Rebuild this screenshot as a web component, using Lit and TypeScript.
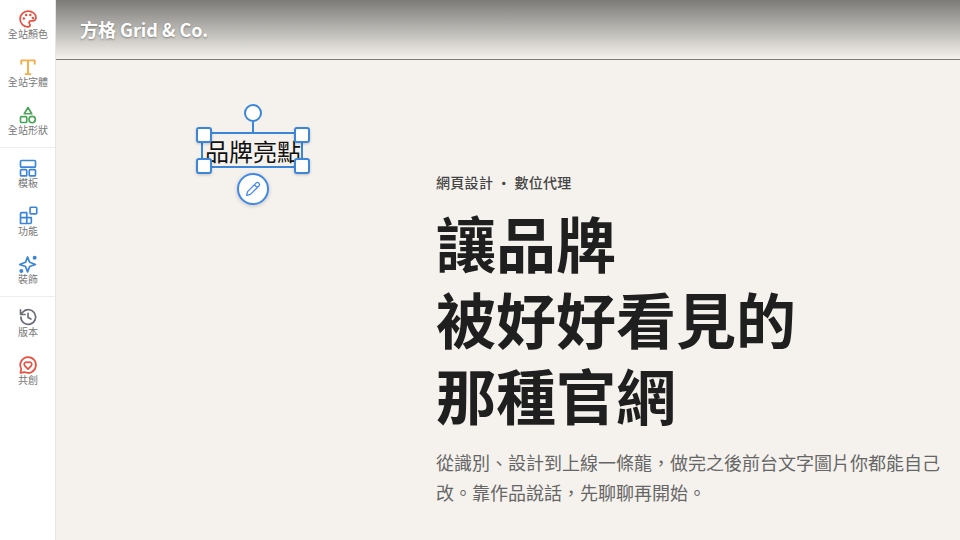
import { LitElement, html, css, svg } from "lit";
import { customElement } from "lit/decorators.js";

const icons = {
  palette: svg`<path d="M12 2.500a9.500 9.500 0 1 0 0 19c1.600 0 2.500-1 2.500-2.200 0-.7-.3-1.100-.6-1.500-.3-.4-.6-.8-.6-1.400 0-1.200 1-2.200 2.300-2.200H18a4 4 0 0 0 3.500-4C21.500 5.500 17 2.500 12 2.500Z" stroke="#e8503f" fill="none" stroke-width="2" stroke-linejoin="round"/><circle cx="7" cy="11.500" r="1.500" fill="#e8503f"/><circle cx="9.800" cy="7.300" r="1.500" fill="#e8503f"/><circle cx="14.800" cy="7.300" r="1.500" fill="#e8503f"/><circle cx="17.800" cy="10.800" r="1.500" fill="#e8503f"/>`,
  type: svg`<path d="M4 8V4h16V8M12 4V20.500M9 20.500h6" stroke="#f5ad45" fill="none" stroke-width="2.300" stroke-linecap="round" stroke-linejoin="round"/>`,
  shapes: svg`<path d="M12 3 16.500 10.500H7.500Z" stroke="#4aa65a" fill="none" stroke-width="2" stroke-linejoin="round"/><rect x="3" y="14" width="7.500" height="7" rx="1" stroke="#4aa65a" fill="none" stroke-width="2"/><circle cx="17" cy="17.500" r="3.800" stroke="#4aa65a" fill="none" stroke-width="2"/>`,
  layout: svg`<rect x="3" y="3" width="18" height="8" rx="1.200" stroke="#3b86d8" fill="none" stroke-width="2"/><rect x="3" y="14" width="7.500" height="7.500" rx="1.200" stroke="#3b86d8" fill="none" stroke-width="2"/><rect x="13.500" y="14" width="7.500" height="7.500" rx="1.200" stroke="#3b86d8" fill="none" stroke-width="2"/>`,
  blocks: svg`<path d="M10.500 8H4.500A1.500 1.500 0 0 0 3 9.500V21h11.500a1.500 1.500 0 0 0 1.500-1.500V14H10.500V8ZM3 14h13M10.500 14v7" stroke="#3b86d8" fill="none" stroke-width="2" stroke-linejoin="round"/><rect x="14.500" y="1.500" width="8" height="8" rx="1" stroke="#3b86d8" fill="none" stroke-width="2"/>`,
  sparkle: svg`<path d="M11.500 3.500 14 10l7 2.500-7 2.500-2.500 6.500L9 15l-7-2.500L9 10Z" stroke="#3b86d8" fill="none" stroke-width="2" stroke-linejoin="round"/><circle cx="20" cy="4.500" r="2.400" fill="#3b86d8"/><circle cx="4" cy="20.500" r="2.400" fill="#3b86d8"/>`,
  history: svg`<path d="M3.500 12a8.800 8.800 0 1 0 2.600-6.200L3 9M3 3.500V9h5.500M12 7.500v5l3.500 2" stroke="#6b6e76" fill="none" stroke-width="2" stroke-linecap="round" stroke-linejoin="round"/>`,
  chat: svg`<path d="M12 2.500a9.500 9.500 0 1 1-4.200 18L2.800 21.500l1.100-5A9.500 9.500 0 0 1 12 2.500Z" stroke="#e8503f" fill="none" stroke-width="2" stroke-linejoin="round"/><path d="M12 17 7.900 12.800a2.800 2.800 0 0 1 4.100-3.700 2.800 2.800 0 0 1 4.100 3.700Z" stroke="#e8503f" fill="none" stroke-width="2" stroke-linejoin="round"/>`,
};

const groups = [
  [["palette", "全站顏色"], ["type", "全站字體"], ["shapes", "全站形狀"]],
  [["layout", "模板"], ["blocks", "功能"], ["sparkle", "裝飾"]],
  [["history", "版本"], ["chat", "共創"]],
] as [keyof typeof icons, string][][];

@customElement("app-root")
export class AppRoot extends LitElement {
  static styles = css`
    :host { display: block; width: 960px; height: 540px; overflow: hidden; font-family: "Noto Sans CJK TC", "Noto Sans", sans-serif; }
    .page { display: flex; height: 540px; background: #f5f2ed; }
    .side { width: 55px; flex: none; background: #fff; border-right: 1px solid #e9e6e1; display: flex; flex-direction: column; padding-top: 3px; }
    .group { display: flex; flex-direction: column; border-bottom: 1px solid #eeeeee; margin-bottom: 4px; }
    .group:last-child { border-bottom: 0; }
    .item { height: 48px; display: flex; flex-direction: column; align-items: center; padding: 6px 0 0 1px; box-sizing: border-box; color: #777; font-size: 10px; line-height: 14px; letter-spacing: .1px; }
    .item svg { width: 20px; height: 20px; display: block; margin: 0 1px -2px 0; }
    .main { flex: 1; position: relative; min-width: 0; display: flex; flex-direction: column; }
    .head { height: 60px; box-sizing: border-box; flex: none; border-bottom: 1px solid #7d7a75; padding: 0 0 2px 24px; display: flex; align-items: center; background: linear-gradient(to bottom, #7c7b77, #f5f2ed); color: #fff; font-weight: 700; font-size: 18px; text-shadow: 0 1px 2px rgba(0,0,0,.35); }
    .hero { flex: 1; padding: 111px 16px 0 380px; color: #1f1f1f; }
    .eyebrow { font-size: 14px; font-weight: 500; line-height: 22px; letter-spacing: .3px; color: #444; white-space: pre; }
    h1 { margin: 11px 0 16px; font-size: 60px; line-height: 76px; font-weight: 700; }
    p { margin: 0; font-size: 18px; line-height: 29.700px; color: #666; }
    .sel { position: absolute; left: 145px; top: 132px; width: 102px; height: 36px; box-sizing: border-box; border: 2px solid #3b86d8; color: #111; font-size: 24px; line-height: 33px; text-indent: 2px; white-space: nowrap; font-weight: 400; }
    .h { position: absolute; width: 12px; height: 12px; background: #fff; border: 2px solid #3b86d8; border-radius: 3px; box-shadow: 0 1px 3px rgba(0,0,0,.2); }
    .tl { left: -7px; top: -7px; } .tr { right: -9px; top: -7px; } .bl { left: -7px; bottom: -8px; } .br { right: -9px; bottom: -8px; }
    .rot { position: absolute; left: 41px; top: -30px; width: 14px; height: 14px; background: #fff; border: 2px solid #3b86d8; border-radius: 50%; }
    .stem { position: absolute; left: 49px; top: -12px; width: 2px; height: 12px; background: #3b86d8; }
    .edit { position: absolute; left: 34px; top: 39px; width: 28px; height: 28px; background: #fff; border: 2px solid #4288e8; border-radius: 50%; display: flex; align-items: center; justify-content: center; box-shadow: 0 1px 4px rgba(0,0,0,.2); text-indent: 0; }
    .edit svg { width: 18px; height: 18px; }
  `;

  render() {
    return html`<div class="page">
      <nav class="side">
        ${groups.map((g) => html`<div class="group">
          ${g.map(([ic, label]) => html`<div class="item"><svg viewBox="0 0 24 24">${icons[ic]}</svg><span>${label}</span></div>`)}
        </div>`)}
      </nav>
      <main class="main">
        <header class="head">方格 Grid &amp; Co.</header>
        <section class="hero">
          <div class="eyebrow">網頁設計 ・ 數位代理</div>
          <h1>讓品牌<br />被好好看見的<br />那種官網</h1>
          <p>從識別、設計到上線一條龍，做完之後前台文字圖片你都能自己改。靠作品說話，先聊聊再開始。</p>
        </section>
        <div class="sel">品牌亮點
          <span class="stem"></span><span class="rot"></span>
          <span class="h tl"></span><span class="h tr"></span><span class="h bl"></span><span class="h br"></span>
          <span class="edit"><svg viewBox="0 0 24 24"><path d="M3.500 20.500l1.300-5L16 4.200a2.500 2.500 0 0 1 3.800 3.800L8.500 19.200 3.500 20.500ZM14 6.500l3.500 3.500" stroke="#4288e8" fill="none" stroke-width="1.700" stroke-linejoin="round"/></svg></span>
        </div>
      </main>
    </div>`;
  }
}
